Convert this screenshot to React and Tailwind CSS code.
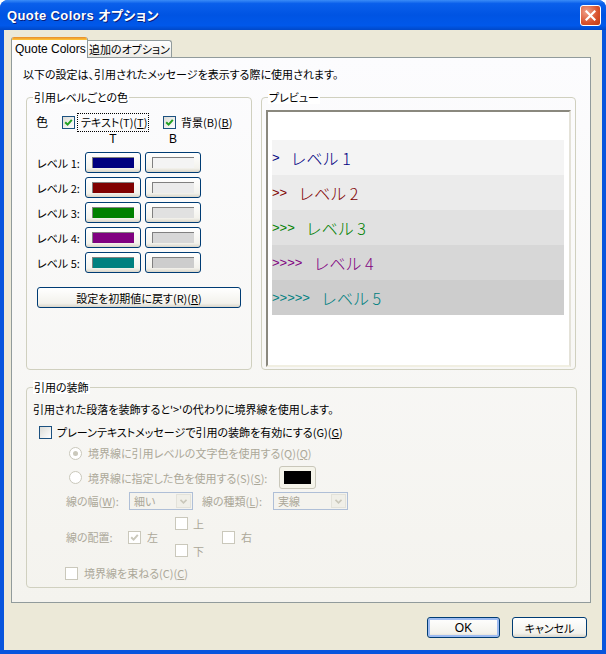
import React from 'react'

// Quote Colors オプション dialog (XP Luna look)

const JP = "font-['Noto_Sans_CJK_JP','Noto_Sans',sans-serif] [font-feature-settings:'palt']"
const DIS = 'text-[#ACA899]'

const LEVELS = [
    { n: 1, fg: '#000080', bg: '#F4F4F4' },
    { n: 2, fg: '#800000', bg: '#EBEBEB' },
    { n: 3, fg: '#008000', bg: '#E1E1E1' },
    { n: 4, fg: '#800080', bg: '#D7D7D7' },
    { n: 5, fg: '#008080', bg: '#CDCDCD' }
]

const Acc = ({ base, k }) => (
    <>{base}(<u className="underline-offset-1">{k}</u>)</>
)

const Check = ({ checked, disabled }) => (
    <span
        className={`inline-flex w-[13px] h-[13px] shrink-0 items-center justify-center border ${
            disabled ? 'border-[#CAC8BB] bg-white' : 'border-[#1C5180] bg-[linear-gradient(135deg,#DCDCD7,#FFFFFF)]'
        }`}
    >
        {checked && (
            <svg width="9" height="9" viewBox="0 0 9 9">
                <path d="M1.2 4.2 L3.6 6.6 L7.8 1.8" fill="none" stroke={disabled ? '#CAC8BB' : '#21A121'} strokeWidth="2" />
            </svg>
        )}
    </span>
)

const Radio = ({ checked }) => (
    <span className="inline-flex w-[13px] h-[13px] shrink-0 rounded-full border border-[#CAC8BB] bg-white items-center justify-center">
        {checked && <span className="w-[5px] h-[5px] rounded-full bg-[#CAC8BB]" />}
    </span>
)

const XPButton = ({ className = '', focused, children }) => (
    <div
        className={`flex items-center justify-center rounded-[3px] border border-[#003C74] bg-[linear-gradient(to_bottom,#FFFFFF,#F3F2EC_80%,#D9D5C9)] ${
            focused ? 'shadow-[inset_0_0_0_2px_#9DBBF1]' : ''
        } ${className}`}
    >
        {children}
    </div>
)

const Swatch = ({ color }) => (
    <XPButton className="w-[56px] h-[21px]">
        <div
            className="w-[42px] h-[11px] border-t border-l border-[#808080] border-b-white border-r-white"
            style={{ backgroundColor: color }}
        />
    </XPButton>
)

const Combo = ({ w, text }) => (
    <div className={`${w} h-[18px] border border-[#AFBFD7] bg-[#F4F3EE] flex items-center`}>
        <span className={`flex-1 pl-[4px] ${DIS}`}>{text}</span>
        <span className="w-[15px] h-[14px] mr-[1px] bg-[#F0EFE8] border border-[#E3E2DA] flex items-center justify-center">
            <svg width="7" height="5" viewBox="0 0 7 5">
                <path d="M0.5 0.8 L3.5 3.8 L6.5 0.8" stroke="#C9C7BA" fill="none" strokeWidth="1.6" />
            </svg>
        </span>
    </div>
)

const Group = ({ title, className = '', children }) => (
    <fieldset className={`border border-[#D0D0BF] rounded-[4px] ${className}`}>
        <legend className="ml-[6px] px-[1px] h-[14px] leading-[14px] bg-white">{title}</legend>
        {children}
    </fieldset>
)

const TitleBar = () => (
    <div className="h-[30px] shrink-0 flex items-center justify-between pl-[7px] pr-[5px] bg-[linear-gradient(to_bottom,#3A8CF7_0%,#0A5FEB_12%,#0054E3_50%,#0058EA_85%,#0048C8_100%)]">
        <span className="text-white font-bold text-[13px] tracking-[0.4px] [text-shadow:1px_1px_0_#0A1E7A]">
            <span className="font-['Liberation_Sans',sans-serif]">Quote Colors </span>オプション
        </span>
        <div className="w-[21px] h-[21px] rounded-[3px] border border-white bg-[radial-gradient(circle_at_30%_30%,#F0A08A,#D8512C_60%,#C13B12)] flex items-center justify-center">
            <svg width="11" height="11" viewBox="0 0 11 11">
                <path d="M1.5 1.5L9.5 9.5M9.5 1.5L1.5 9.5" stroke="white" strokeWidth="2.2" strokeLinecap="square" />
            </svg>
        </div>
    </div>
)

export default function App() {
    return (
        <div className={`w-[606px] h-[654px] flex flex-col rounded-t-[8px] bg-[#0855DD] overflow-hidden whitespace-nowrap ${JP} text-[11px] leading-[14px] text-black`}>
            <TitleBar />
            <div className="flex-1 mx-[4px] mb-[4px] bg-[#ECE9D8] flex flex-col">
                {/* tabs */}
                <div className="relative z-10 flex items-end ml-[7px] mt-[7px] h-[20px]">
                    <div className="w-[77px] h-[21px] -mb-[1px] flex flex-col bg-[#FCFCFE] border-x border-[#919B9C] rounded-t-[3px] overflow-hidden">
                        <div className="h-[3px] bg-[linear-gradient(#E68B2C,#FFC73C)]" />
                        <div className="flex-1 flex items-center pl-[3px] font-['Liberation_Sans',sans-serif] text-[12px]">Quote Colors</div>
                    </div>
                    <div className="w-[84px] h-[17px] flex items-center justify-center border-t border-r border-[#919B9C] rounded-tr-[3px] bg-[linear-gradient(#FFFFFF,#ECEBE6)]">
                        追加のオプション
                    </div>
                </div>

                {/* panel */}
                <div className="ml-[7px] w-[580px] h-[546px] border border-[#919B9C] bg-[linear-gradient(#FCFCFE,#F4F3EE)]">
                    <p className="ml-[11px] mt-[9px]">以下の設定は、引用されたメッセージを表示する際に使用されます。</p>

                    <div className="flex ml-[14px] mt-[9px] gap-[9px]">
                        <Group title="引用レベルごとの色" className="w-[226px] h-[280px]">
                            <div className="flex items-center h-[18px] mt-[9px] ml-[9px]">
                                <span className="w-[26px] text-[12px]">色</span>
                                <Check checked />
                                <span className="ml-[2px] px-[3px] w-[72px] h-[19px] border border-dotted border-black flex items-center">
                                    <Acc base="テキスト(T)" k="T" />
                                </span>
                                <span className="ml-[14px]"><Check checked /></span>
                                <span className="ml-[5px]"><Acc base="背景(B)" k="B" /></span>
                            </div>
                            <div className="flex gap-[4px] h-[14px] mt-[1px] ml-[58px] font-['Liberation_Sans',sans-serif] text-[12px]">
                                <span className="w-[56px] text-center">T</span>
                                <span className="w-[56px] text-center">B</span>
                            </div>
                            <div className="flex flex-col gap-[4px] mt-[6px] ml-[10px]">
                                {LEVELS.map(l => (
                                    <div key={l.n} className="flex items-center">
                                        <span className="w-[48px]">レベル {l.n}:</span>
                                        <Swatch color={l.fg} />
                                        <span className="ml-[4px]"><Swatch color={l.bg} /></span>
                                    </div>
                                ))}
                            </div>
                            <XPButton className="ml-[10px] mt-[14px] w-[204px] h-[21px]">
                                <span>設定を初期値に戻す<Acc base="(R)" k="R" /></span>
                            </XPButton>
                        </Group>

                        <Group title="プレビュー" className="w-[315px] h-[280px]">
                            <div className="ml-[4px] mt-[6px] w-[305px] h-[257px] bg-white border-2 border-t-[#8A887E] border-l-[#8A887E] border-b-[#F1EFE2] border-r-[#E4E2D8]">
                                <div className="mt-[28px] ml-[4px] w-[292px] text-[16px] leading-[20px] font-light [font-feature-settings:normal]">
                                    {LEVELS.map(l => (
                                        <div
                                            key={l.n}
                                            className="h-[35px] flex items-center"
                                            style={{ backgroundColor: l.bg, color: l.fg }}
                                        >
                                            <span className="font-['Liberation_Sans',sans-serif] text-[13px] font-normal">{'>'.repeat(l.n)}</span>
                                            <span className="ml-[11px]">レベル {l.n}</span>
                                        </div>
                                    ))}
                                </div>
                            </div>
                        </Group>
                    </div>

                    <Group title="引用の装飾" className="ml-[14px] mt-[10px] w-[551px] h-[208px]">
                        <p className="ml-[6px] mt-[8px]">引用された段落を装飾すると'&gt;'の代わりに境界線を使用します。</p>
                        <div className="flex items-center h-[14px] mt-[9px] ml-[12px]">
                            <Check />
                            <span className="ml-[5px]"><Acc base="プレーンテキストメッセージで引用の装飾を有効にする(G)" k="G" /></span>
                        </div>
                        <div className={`flex items-center h-[14px] mt-[7px] ml-[42px] ${DIS}`}>
                            <Radio checked />
                            <span className="ml-[6px]"><Acc base="境界線に引用レベルの文字色を使用する(Q)" k="Q" /></span>
                        </div>
                        <div className={`flex items-center h-[23px] mt-[6px] ml-[42px] ${DIS}`}>
                            <div className="w-[210px] flex items-center">
                                <Radio />
                                <span className="ml-[6px]"><Acc base="境界線に指定した色を使用する(S)" k="S" />:</span>
                            </div>
                            <div className="w-[37px] h-[23px] rounded-[3px] border border-[#C9C7BA] bg-[#F5F4EA] flex items-center justify-center">
                                <div className="w-[27px] h-[13px] bg-black" />
                            </div>
                        </div>
                        <div className={`flex items-center h-[18px] mt-[3px] ml-[39px] ${DIS}`}>
                            <span className="w-[63px]"><Acc base="線の幅" k="W" />:</span>
                            <Combo w="w-[64px]" text="細い" />
                            <span className="ml-[9px] w-[71px]"><Acc base="線の種類" k="L" />:</span>
                            <Combo w="w-[75px]" text="実線" />
                        </div>
                        <div className={`flex items-center h-[40px] mt-[7px] ml-[39px] ${DIS}`}>
                            <span className="w-[62px]">線の配置:</span>
                            <div className="w-[47px] flex items-center">
                                <Check checked disabled />
                                <span className="ml-[6px]">左</span>
                            </div>
                            <div className="w-[47px] h-[40px] flex flex-col justify-between">
                                <div className="flex items-center h-[13px]"><Check disabled /><span className="ml-[5px]">上</span></div>
                                <div className="flex items-center h-[13px]"><Check disabled /><span className="ml-[5px]">下</span></div>
                            </div>
                            <div className="flex items-center">
                                <Check disabled />
                                <span className="ml-[6px]">右</span>
                            </div>
                        </div>
                        <div className={`flex items-center h-[14px] mt-[9px] ml-[38px] ${DIS}`}>
                            <Check disabled />
                            <span className="ml-[6px]"><Acc base="境界線を束ねる(C)" k="C" /></span>
                        </div>
                    </Group>
                </div>

                {/* dialog buttons */}
                <div className="flex justify-end gap-[12px] mt-[14px] mr-[15px]">
                    <XPButton focused className="w-[73px] h-[21px]">
                        <span className="font-['Liberation_Sans',sans-serif] text-[12px]">OK</span>
                    </XPButton>
                    <XPButton className="w-[75px] h-[21px]">キャンセル</XPButton>
                </div>
            </div>
        </div>
    )
}
